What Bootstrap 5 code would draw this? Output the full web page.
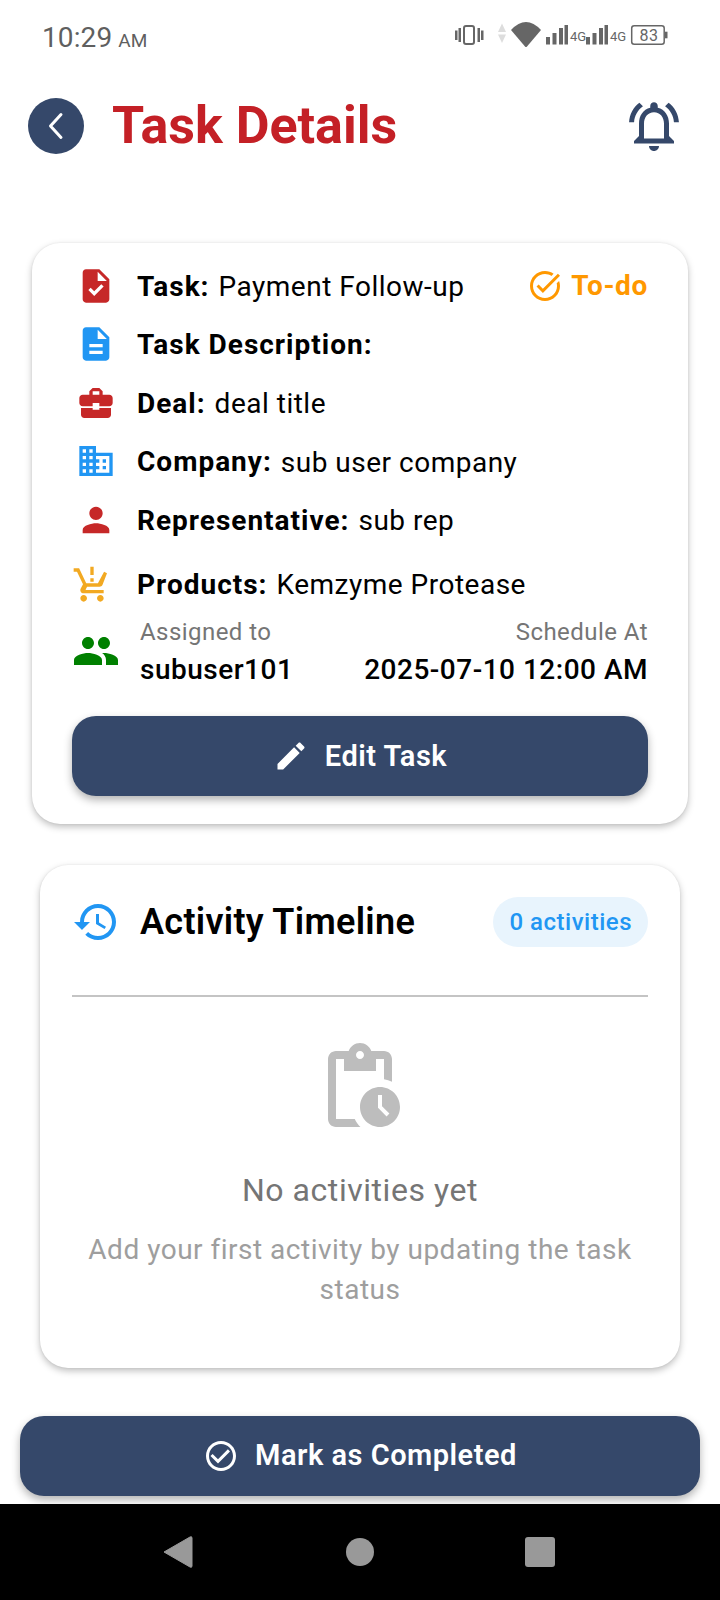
<!DOCTYPE html>
<html lang="en">
<head>
<meta charset="utf-8">
<title>Task Details</title>
<link href="https://cdn.jsdelivr.net/npm/bootstrap@5.3.0/dist/css/bootstrap.min.css" rel="stylesheet">
<style>
html,body{margin:0;background:#fff}
body{font-family:Roboto,"Liberation Sans",sans-serif;color:#000}
.screen{width:720px;height:1600px;overflow:hidden}
.status-bar{height:96px;padding:22px 40px 0 42px;align-items:flex-start}
.clock{font-size:28px;line-height:32px;color:#5f5f5f;letter-spacing:.1px}
.clock span{font-size:19px;margin-left:-1px}
.status-icons{width:240px;height:50px;margin:-12px 0 0 0;display:block}
.status-icons text{font-family:Roboto,sans-serif;fill:#666}
.top-bar{height:60px;padding:0 36px 0 28px}
.back-btn{width:56px;height:56px;border-radius:50%;background:#35486a;padding:0;border:0;flex:none}
.page-title{font-size:52px;font-weight:700;color:#c42026;margin:0 0 0 28px;line-height:60px;letter-spacing:0}
.info-card{margin:87px 32px 0;padding:23px 40px 28px;border:0;border-radius:28px;box-shadow:0 3px 7px rgba(0,0,0,.25),0 0 2px rgba(0,0,0,.08)}
.info-row{height:40px;margin-bottom:18.5px;font-size:28px;letter-spacing:.5px;line-height:36px;white-space:nowrap}
.info-row.tail{margin-bottom:25px}
.info-row b{font-weight:700;margin-right:9px;letter-spacing:1px;padding-top:2px}
.val-text{padding-top:3px}
.info-row.lifted b{padding-top:0}
.info-row.lifted .val-text{padding-top:1px}
.ico-box{width:48px;flex:none;margin-right:17px;display:flex;justify-content:center}
.status-todo{margin-left:auto;color:#ff9800;font-weight:700;font-size:28px;letter-spacing:.65px}
.status-todo svg{margin-right:8px}
.meta-row{margin-top:-9px;align-items:center}
.meta-row .ico-box{margin-right:20px}
.meta-label{font-size:24px;line-height:37px;color:#757575;letter-spacing:.45px}
.meta-value{font-size:28px;line-height:37px;font-weight:500;letter-spacing:.5px}
.action-btn{height:80px;background:#35486a;border:0;border-radius:24px;color:#fff;font-size:29px;font-weight:600;letter-spacing:.5px;box-shadow:0 4px 8px rgba(0,0,0,.3);display:flex;align-items:center;justify-content:center;gap:11px;width:100%}
.action-btn:hover{background:#35486a;color:#fff}
.edit-btn{margin-top:28px;gap:16px}
.timeline-card{margin:41px 40px 0;padding:32px 32px 0;height:503px;border:0;border-radius:28px;box-shadow:0 3px 7px rgba(0,0,0,.25),0 0 2px rgba(0,0,0,.08)}
.timeline-head{height:50px}
.timeline-title{font-size:36px;font-weight:600;margin:0 0 0 20px;line-height:50px;letter-spacing:.3px}
.count-pill{margin-left:auto;height:50px;line-height:50px;padding:0 16px;background:#e8f4fd;color:#2196f3;border-radius:25px;font-size:24px;font-weight:500;letter-spacing:.5px}
.timeline-rule{height:2px;background:#c4c4c4;margin-top:48px}
.empty-ico{display:block;margin:42px auto 0}
.empty-title{font-size:32px;line-height:40px;color:#757575;margin-top:35px;letter-spacing:.55px;text-align:center}
.empty-text{font-size:28px;line-height:40px;color:#9e9e9e;margin-top:20px;letter-spacing:.5px;text-align:center}
.bottom-wrap{margin:48px 20px 0}
.bottom-btn{gap:16px}
.nav-strip{margin-top:8px;height:96px;background:#000}
.nav-strip svg{display:block}
</style>
</head>
<body>
<div class="screen d-flex flex-column">

  <div class="status-bar d-flex justify-content-between">
    <div class="clock">10:29 <span>AM</span></div>
    <svg class="status-icons" viewBox="0 0 240 50" aria-hidden="true">
      <g fill="#666">
        <rect x="15" y="20.500" width="2.500" height="9.500"/>
        <rect x="18.500" y="18" width="2.500" height="14" />
        <rect x="24" y="16" width="10" height="18" rx="2" fill="none" stroke="#666" stroke-width="2"/>
        <rect x="37.500" y="18" width="2.500" height="14"/>
        <rect x="41" y="20.500" width="2.500" height="9.500"/>
        <path d="M58 22l4-8.500 4 8.500zM58 24.500h8l-4 8.500z" fill="#ddd"/>
        <path d="M71 20Q86 4 101 20L87 36.500q-1 1-2 0z"/>
        <rect x="106" y="27" width="4" height="7.500"/><rect x="112.500" y="23" width="4" height="11.500"/><rect x="119" y="18" width="4" height="16.500"/><rect x="124.500" y="15" width="3.500" height="19.500"/>
        <rect x="146" y="27" width="4" height="7.500"/><rect x="152.500" y="23" width="4" height="11.500"/><rect x="159" y="18" width="4" height="16.500"/><rect x="164.500" y="15" width="3.500" height="19.500"/>
        <rect x="225" y="21.700" width="2.500" height="6.600"/>
      </g>
      <text x="130" y="31" font-size="13">4G</text>
      <text x="170" y="31" font-size="13">4G</text>
      <rect x="191.700" y="15.700" width="32.500" height="18.500" rx="2.500" fill="none" stroke="#666" stroke-width="1.500"/>
      <text x="199.500" y="30.500" font-size="16" letter-spacing=".5">83</text>
    </svg>
  </div>

  <div class="top-bar d-flex align-items-center">
    <button class="btn back-btn d-flex align-items-center justify-content-center" type="button" aria-label="Back">
      <svg width="24" height="30" viewBox="0 0 24 30"><path d="M17 3.500 6.500 15 17 26.500" fill="none" stroke="#fff" stroke-width="3" stroke-linecap="round" stroke-linejoin="round"/></svg>
    </button>
    <h1 class="page-title">Task Details</h1>
    <svg class="ms-auto" width="60" height="60" viewBox="0 0 24 24" fill="#35486a"><path d="M12 22c1.100 0 2-.9 2-2h-4c0 1.100.9 2 2 2zm6-6v-5c0-3.070-1.630-5.640-4.500-6.320V4c0-.83-.67-1.500-1.500-1.500s-1.500.67-1.500 1.500v.68C7.640 5.360 6 7.920 6 11v5l-2 2v1h16v-1l-2-2zm-2 1H8v-6c0-2.480 1.510-4.500 4-4.500s4 2.020 4 4.500v6zM7.580 4.080L6.150 2.650C3.750 4.480 2.170 7.300 2.030 10.500h2c.15-2.650 1.510-4.970 3.550-6.420zm12.390 6.420h2c-.15-3.200-1.730-6.020-4.120-7.850l-1.420 1.430c2.020 1.450 3.390 3.770 3.540 6.420z"/></svg>
  </div>

  <div class="card info-card">
    <div class="info-row d-flex align-items-center">
      <span class="ico-box"><svg width="40" height="40" viewBox="0 0 24 24" fill="#c62828"><path d="M14 2H6c-1.100 0-1.990.9-1.990 2L4 20c0 1.100.89 2 1.990 2H18c1.100 0 2-.9 2-2V8l-6-6zm-3.060 16L7.400 14.460l1.410-1.410 2.120 2.120 4.240-4.240 1.410 1.410L10.940 18zM13 9V3.500L18.500 9H13z"/></svg></span>
      <b>Task:</b><span class="val-text">Payment Follow-up</span>
      <span class="status-todo d-flex align-items-center">
        <svg width="36" height="36" viewBox="0 0 24 24" fill="#ff9800"><path d="M22 5.180L10.590 16.600l-4.240-4.240 1.410-1.410 2.830 2.830 10-10L22 5.180zm-2.210 5.040c.13.57.21 1.170.21 1.780 0 4.420-3.580 8-8 8s-8-3.580-8-8 3.580-8 8-8c1.580 0 3.040.46 4.280 1.250l1.440-1.440C16.100 2.670 14.130 2 12 2 6.480 2 2 6.480 2 12s4.480 10 10 10 10-4.480 10-10c0-1.190-.22-2.330-.6-3.390l-1.610 1.610z"/></svg>To-do
      </span>
    </div>
    <div class="info-row d-flex align-items-center">
      <span class="ico-box"><svg width="40" height="40" viewBox="0 0 24 24" fill="#2196f3"><path d="M14 2H6c-1.100 0-1.990.9-1.990 2L4 20c0 1.100.89 2 1.990 2H18c1.100 0 2-.9 2-2V8l-6-6zm2 16H8v-2h8v2zm0-4H8v-2h8v2zm-3-5V3.500L18.500 9H13z"/></svg></span>
      <b>Task Description:</b>
    </div>
    <div class="info-row d-flex align-items-center">
      <span class="ico-box"><svg width="40" height="40" viewBox="0 0 24 24" fill="#c62828"><path d="M10 16v-1H3.010L3 19c0 1.110.89 2 2 2h14c1.110 0 2-.89 2-2v-4h-7v1h-4zm10-9h-4.010V5l-2-2h-4l-2 2v2H4c-1.100 0-2 .9-2 2v3c0 1.110.89 2 2 2h6v-2h4v2h6c1.100 0 2-.9 2-2V9c0-1.100-.9-2-2-2zm-6 0h-4V5h4v2z"/></svg></span>
      <b>Deal:</b><span class="val-text">deal title</span>
    </div>
    <div class="info-row d-flex align-items-center">
      <span class="ico-box"><svg width="40" height="40" viewBox="0 0 24 24" fill="#2196f3"><path d="M12 7V3H2v18h20V7H12zM6 19H4v-2h2v2zm0-4H4v-2h2v2zm0-4H4V9h2v2zm0-4H4V5h2v2zm4 12H8v-2h2v2zm0-4H8v-2h2v2zm0-4H8V9h2v2zm0-4H8V5h2v2zm10 12h-8v-2h2v-2h-2v-2h2v-2h-2V9h8v10zm-2-8h-2v2h2v-2zm0 4h-2v2h2v-2z"/></svg></span>
      <b>Company:</b><span class="val-text">sub user company</span>
    </div>
    <div class="info-row tail d-flex align-items-center">
      <span class="ico-box"><svg width="40" height="40" viewBox="0 0 24 24" fill="#c62828"><path d="M12 12c2.210 0 4-1.790 4-4s-1.790-4-4-4-4 1.790-4 4 1.790 4 4 4zm0 2c-2.670 0-8 1.340-8 4v2h16v-2c0-2.660-5.330-4-8-4z"/></svg></span>
      <b>Representative:</b><span class="val-text">sub rep</span>
    </div>
    <div class="info-row lifted d-flex align-items-center">
      <span class="ico-box justify-content-start"><svg width="40" height="40" viewBox="0 0 24 24" fill="#f2a922"><path d="M13 10h-2V8h2v2zm0-4h-2V1h2v5zM7 18c-1.100 0-1.990.9-1.990 2S5.900 22 7 22s2-.9 2-2-.9-2-2-2zm10 0c-1.100 0-1.990.9-1.990 2s.89 2 1.990 2 2-.9 2-2-.9-2-2-2zm-8.860-3.250c0-.05.01-.09.03-.12l.9-1.630h7.450c.75 0 1.410-.41 1.750-1.030L21 4.960 19.250 4l-3.700 7H8.530L4.270 2H1v2h2l3.600 7.590-1.350 2.440C4.520 15.370 5.480 17 7 17h12v-2H8.410c-.13 0-.25-.11-.25-.25z"/></svg></span>
      <b>Products:</b><span class="val-text">Kemzyme Protease</span>
    </div>
    <div class="meta-row d-flex">
      <span class="ico-box"><svg width="48" height="48" viewBox="0 0 24 24" fill="#008000"><path d="M16 11c1.660 0 2.990-1.340 2.990-3S17.660 5 16 5c-1.660 0-3 1.340-3 3s1.340 3 3 3zm-8 0c1.660 0 2.990-1.340 2.990-3S9.660 5 8 5C6.340 5 5 6.340 5 8s1.340 3 3 3zm0 2c-2.330 0-7 1.170-7 3.500V19h14v-2.500c0-2.330-4.670-3.500-7-3.500zm8 0c-.29 0-.62.02-.97.05 1.160.84 1.970 1.970 1.970 3.450V19h6v-2.500c0-2.330-4.670-3.500-7-3.500z"/></svg></span>
      <div>
        <div class="meta-label">Assigned to</div>
        <div class="meta-value">subuser101</div>
      </div>
      <div class="ms-auto text-end">
        <div class="meta-label">Schedule At</div>
        <div class="meta-value">2025-07-10 12:00 AM</div>
      </div>
    </div>
    <button class="btn action-btn edit-btn" type="button">
      <svg width="36" height="36" viewBox="0 0 24 24" fill="#fff"><path d="M3 17.250V21h3.750L17.810 9.940l-3.750-3.750L3 17.250zM20.710 7.040c.39-.39.39-1.020 0-1.410l-2.340-2.340c-.39-.39-1.020-.39-1.410 0l-1.830 1.830 3.750 3.750 1.830-1.830z"/></svg>
      Edit Task
    </button>
  </div>

  <div class="card timeline-card">
    <div class="timeline-head d-flex align-items-center">
      <svg width="48" height="48" viewBox="0 0 24 24" fill="#2196f3"><path d="M13 3c-4.970 0-9 4.030-9 9H1l3.890 3.890.07.14L9 12H6c0-3.870 3.130-7 7-7s7 3.130 7 7-3.130 7-7 7c-1.930 0-3.680-.79-4.940-2.060l-1.420 1.420C8.270 19.990 10.510 21 13 21c4.970 0 9-4.030 9-9s-4.030-9-9-9zm-1 5v5l4.280 2.540.72-1.210-3.500-2.080V8H12z"/></svg>
      <h2 class="timeline-title">Activity Timeline</h2>
      <span class="count-pill">0 activities</span>
    </div>
    <div class="timeline-rule"></div>
    <svg class="empty-ico" width="96" height="96" viewBox="0 0 24 24" fill="#bdbdbd"><path d="M17 12c-2.760 0-5 2.240-5 5s2.240 5 5 5 5-2.240 5-5-2.240-5-5-5zm1.650 7.350L16.500 17.200V14h1v2.790l1.850 1.850-.7.710zM18 3h-3.180C14.400 1.840 13.300 1 12 1s-2.400.84-2.820 2H6c-1.100 0-2 .9-2 2v15c0 1.100.9 2 2 2h6.110c-.59-.58-1.070-1.250-1.420-2H6V5h2v3h8V5h2v5.080c.71.1 1.380.31 2 .6V5c0-1.100-.9-2-2-2zm-6 2c-.55 0-1-.45-1-1s.45-1 1-1 1 .45 1 1-.45 1-1 1z"/></svg>
    <div class="empty-title">No activities yet</div>
    <div class="empty-text">Add your first activity by updating the task status</div>
  </div>

  <div class="bottom-wrap">
    <button class="btn action-btn bottom-btn" type="button">
      <svg width="36" height="36" viewBox="0 0 24 24" fill="#fff"><path d="M16.590 7.580L10 14.170l-3.590-3.580L5 12l5 5 8-8zM12 2C6.480 2 2 6.480 2 12s4.480 10 10 10 10-4.480 10-10S17.520 2 12 2zm0 18c-4.420 0-8-3.580-8-8s3.580-8 8-8 8 3.580 8 8-3.580 8-8 8z"/></svg>
      Mark as Completed
    </button>
  </div>

  <div class="nav-strip">
    <svg width="720" height="96" viewBox="0 0 720 96" fill="#999">
      <path d="M164 48 190 33q2-1 2 1v28q0 2-2 1z" stroke="#999" stroke-linejoin="round"/>
      <circle cx="360" cy="48" r="14"/>
      <rect x="525" y="33" width="30" height="30" rx="3"/>
    </svg>
  </div>
</div>
<script src="https://cdn.jsdelivr.net/npm/bootstrap@5.3.0/dist/js/bootstrap.bundle.min.js"></script>
</body>
</html>
